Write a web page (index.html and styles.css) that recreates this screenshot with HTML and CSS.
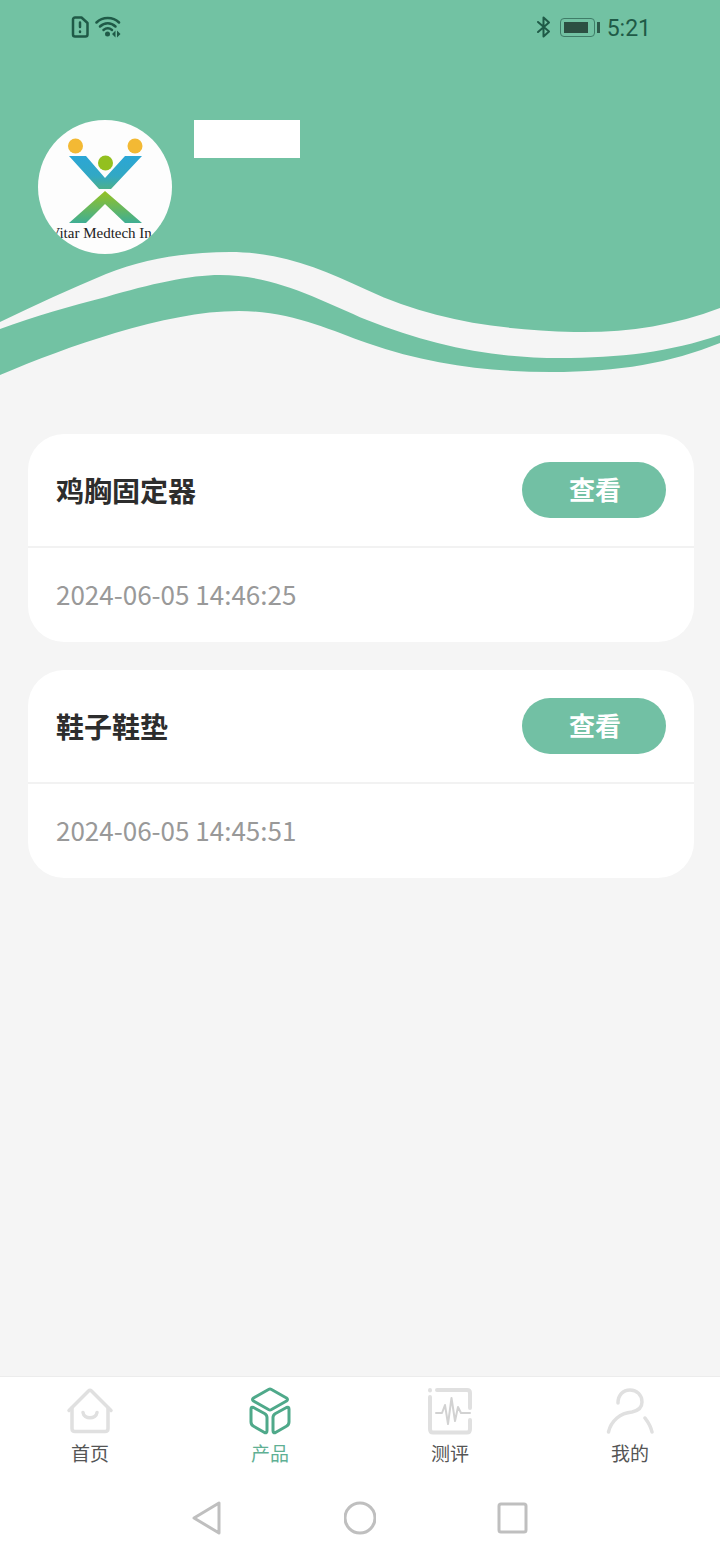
FILE: index.html
```html
<!DOCTYPE html>
<html lang="zh-CN">
<head>
    <meta charset="UTF-8">
    <title>产品</title>
    <meta name="viewport" content="width=device-width, initial-scale=1">
    <link rel="stylesheet" href="styles.css">
</head>
<body>
<div class="page">
    <header class="top">
        <svg class="wave" width="720" height="380" viewBox="0 0 720 380">
            <path class="wave-fill" d="M0 0H720V308C672 326 625 333 574 332C500 330 430 320 367 290C320 268 280 252 230 252C190 252 145 258 106 274C70 289 35 305 0 322Z"/>
            <path class="wave-fill" d="M0 329C36 316 70 306 106 297C150 284 190 275 220 275C275 275 320 300 367 320C430 345 490 358 560 358C620 358 670 352 720 335V343C670 363 620 372 551 372C490 372 430 365 367 343C330 330 290 311 239 311C200 311 160 320 115 333C75 345 35 360 0 375Z"/>
        </svg>
        <div class="status">
            <div class="status-left">
                <svg class="sim" width="18" height="22" viewBox="0 0 18 22">
                    <path d="M4 1.500H10.500L16.500 7V18.500A2 2 0 0 1 14.500 20.500H4A2 2 0 0 1 2 18.500V3.500A2 2 0 0 1 4 1.500Z"/>
                    <path d="M9 6.500V11M9 15.500V16"/>
                </svg>
                <svg class="wifi" width="26" height="22" viewBox="0 0 26 22">
                    <path d="M1.500 6.500C7.500 .5 18 .5 24 6.500"/>
                    <path d="M5 10.500C9.500 6 16 6 20.500 10.500"/>
                    <path d="M8.500 14C11 12 14.500 12 17 14"/>
                    <circle cx="12.500" cy="18" r="2.500"/>
                    <path class="wifi-arrows" d="M20.500 14.500L17 18L20.500 21.500ZM22 14.500L25.500 18L22 21.500Z"/>
                </svg>
            </div>
            <div class="status-right">
                <svg class="bt" width="16" height="22" viewBox="0 0 16 22">
                    <path d="M2 6L13 15.500L7.500 20.500V1.500L13 6.500L2 16"/>
                </svg>
                <div class="battery"><div class="battery-level"></div></div>
                <div class="battery-cap"></div>
                <span class="time">5:21</span>
            </div>
        </div>
        <div class="profile">
            <div class="avatar">
                <svg width="134" height="134" viewBox="0 0 134 134">
                    <defs>
                        <linearGradient id="armsTop" x1="0" y1="0" x2="0" y2="1">
                            <stop offset="0" stop-color="#2ba6d6"/>
                            <stop offset=".6" stop-color="#32a8c4"/>
                            <stop offset="1" stop-color="#4cb08c"/>
                        </linearGradient>
                        <linearGradient id="armsLow" x1="0" y1="0" x2="0" y2="1">
                            <stop offset="0" stop-color="#96c221"/>
                            <stop offset="1" stop-color="#3fae94"/>
                        </linearGradient>
                        <clipPath id="nameClip"><rect x="17" y="100" width="97" height="30"/></clipPath>
                    </defs>
                    <circle cx="37.500" cy="26" r="7.500" fill="#f3b934"/>
                    <circle cx="97" cy="26" r="7.500" fill="#f3b934"/>
                    <circle cx="67.500" cy="43" r="7.500" fill="#93c01f"/>
                    <polygon points="31,36 48,36 67,58 87,36 104,36 73,69 61,69" fill="url(#armsTop)"/>
                    <polygon points="67,71 104,103 87,103 67,84 48,103 31,103" fill="url(#armsLow)"/>
                    <g clip-path="url(#nameClip)">
                        <text class="logo-name" x="66" y="117.500" text-anchor="middle">Vitar Medtech Inc</text>
                    </g>
                </svg>
            </div>
            <div class="name-block"></div>
        </div>
    </header>

    <main class="list">
        <section class="card">
            <div class="card-head">
                <h2 class="card-title">鸡胸固定器</h2>
                <div class="view-btn">查看</div>
            </div>
            <div class="card-time">2024-06-05 14:46:25</div>
        </section>
        <section class="card">
            <div class="card-head">
                <h2 class="card-title">鞋子鞋垫</h2>
                <div class="view-btn">查看</div>
            </div>
            <div class="card-time">2024-06-05 14:45:51</div>
        </section>
    </main>

    <nav class="tabbar">
        <div class="tab">
            <svg class="tab-icon" width="48" height="48" viewBox="0 0 48 48">
                <path d="M3 23.500L22.500 4Q24 2.500 25.500 4L45 23.500"/>
                <path d="M6 21V41.500Q6 44.500 9 44.500H39Q42 44.500 42 41.500V21"/>
                <path d="M17 25.500C18 32.500 30 32.500 31 25.500"/>
            </svg>
            <span class="tab-label">首页</span>
        </div>
        <div class="tab tab-on">
            <svg class="tab-icon" width="48" height="48" viewBox="0 0 48 48">
                <path d="M22.500 2.500Q24 1.700 25.500 2.500L40.500 11Q42.500 12.500 40.500 14L25.500 22.500Q24 23.300 22.500 22.500L7.500 14Q5.500 12.500 7.500 11Z"/>
                <path d="M5 22Q5 19.500 7.500 20.500L18.500 26.500Q21 28 21 30.500V43.500Q21 46.500 18.500 45.500L8 39.500Q5 38 5 35Z"/>
                <path d="M43 22Q43 19.500 40.500 20.500L29.500 26.500Q27 28 27 30.500V43.500Q27 46.500 29.500 45.500L40 39.500Q43 38 43 35Z"/>
            </svg>
            <span class="tab-label">产品</span>
        </div>
        <div class="tab">
            <svg class="tab-icon tab-test" width="48" height="48" viewBox="0 0 48 48">
                <path d="M11 3H41Q44 3 44 6V21M44 33V42Q44 45.500 41 45.500H7Q4 45.500 4 42V10M4 3V3.500"/>
                <path class="tab-thin" d="M10 26H16L19 18L22 37L25.500 11L29 34L32 20L35 26H44"/>
            </svg>
            <span class="tab-label">测评</span>
        </div>
        <div class="tab">
            <svg class="tab-icon" width="48" height="48" viewBox="0 0 48 48">
                <path d="M12 16C12 8 17 3 24 3C31 3 36 8 36 15C36 21 31 24 26 25C14 26 5 34 2.500 45"/>
                <path d="M39 31C42 35 45 40 46 45"/>
            </svg>
            <span class="tab-label">我的</span>
        </div>
    </nav>

    <div class="sysbar">
        <svg class="sys-icon" width="32" height="36" viewBox="0 0 32 36">
            <path d="M28 3V33L3 18Z"/>
        </svg>
        <svg class="sys-icon" width="32" height="36" viewBox="0 0 32 36">
            <circle cx="16" cy="18" r="15"/>
        </svg>
        <svg class="sys-icon" width="32" height="36" viewBox="0 0 32 36">
            <rect x="2" y="4" width="27" height="28" rx="2"/>
        </svg>
    </div>
</div>
</body>
</html>
```

FILE: styles.css
```css
*{
    box-sizing: border-box;
}
body{
    margin: 0;
    background: #f5f5f5;
    font-family: "Noto Sans CJK SC", "Noto Sans", sans-serif;
}
.page{
    display: flex;
    flex-direction: column;
    width: 720px;
    height: 1560px;
    overflow: hidden;
}

/* top */
.top{
    position: relative;
    height: 434px;
    flex: none;
}
.wave{
    position: absolute;
    top: 0;
    left: 0;
}
.wave-fill{
    fill: #72c2a3;
}
.status{
    position: relative;
    display: flex;
    justify-content: space-between;
    align-items: center;
    height: 56px;
    padding: 0 69px 2px 71px;
    color: #1f5a47;
}
.status-left, .status-right{
    display: flex;
    align-items: center;
}
.status-left{
    gap: 6px;
}
.sim path, .wifi path, .bt path{
    fill: none;
    stroke: #1f5a47;
    stroke-width: 2.5;
    stroke-linecap: round;
    stroke-linejoin: round;
}
.wifi circle, .wifi .wifi-arrows{
    fill: #1f5a47;
    stroke: none;
}
.bt path{
    stroke-width: 2;
}
.battery{
    width: 35px;
    height: 19px;
    margin-left: 8px;
    padding: 3px 6px 3px 3px;
    border: 1.500px solid #3f7d68;
    border-radius: 4px;
}
.battery-level{
    height: 100%;
    background: #2c4f42;
}
.battery-cap{
    width: 3px;
    height: 11px;
    margin-left: 2px;
    background: #2c5a4a;
}
.time{
    margin: 4px 0 0 7px;
    font-family: Roboto, sans-serif;
    font-size: 23px;
    line-height: 30px;
}
.profile{
    position: relative;
    display: flex;
    gap: 22px;
    margin: 64px 0 0 38px;
}
.avatar{
    width: 134px;
    height: 134px;
    border-radius: 50%;
    background: #fdfdfd;
    overflow: hidden;
}
.logo-name{
    font-family: "Liberation Serif", serif;
    font-size: 15px;
    fill: #222;
}
.name-block{
    width: 106px;
    height: 38px;
    background: #fff;
}

/* list */
.list{
    display: flex;
    flex-direction: column;
    gap: 28px;
    padding: 0 26px 0 28px;
}
.card{
    height: 208px;
    border-radius: 36px;
    background: #fff;
}
.card-head{
    display: flex;
    justify-content: space-between;
    align-items: center;
    height: 114px;
    padding: 0 28px;
    border-bottom: 2px solid #f2f2f2;
}
.card-title{
    margin: 0;
    font-size: 28px;
    font-weight: 700;
    color: #2d2d2d;
}
.view-btn{
    width: 144px;
    height: 56px;
    padding-left: 2px;
    border-radius: 28px;
    background: #72c0a4;
    color: #fff;
    font-size: 26px;
    font-weight: 700;
    line-height: 54px;
    text-align: center;
}
.card-time{
    padding: 26px 28px 0;
    font-size: 26px;
    line-height: 40px;
    color: #999;
}

/* bottom */
.tabbar{
    display: grid;
    grid-template-columns: repeat(4, 1fr);
    height: 105px;
    margin-top: auto;
    padding-top: 10px;
    border-top: 1px solid #ececec;
    background: #fff;
}
.tab{
    display: flex;
    flex-direction: column;
    align-items: center;
}
.tab-icon path{
    fill: none;
    stroke: #e0e0e0;
    stroke-width: 3.500;
    stroke-linecap: round;
    stroke-linejoin: round;
}
.tab-test path{
    stroke-width: 4;
}
.tab-icon .tab-thin{
    stroke-width: 2;
    stroke: #d2d2d2;
}
.tab-on .tab-icon path{
    stroke: #4fa98a;
    stroke-width: 3;
}
.tab-label{
    margin-top: 4px;
    font-size: 19px;
    line-height: 28px;
    color: #555;
}
.tab-on .tab-label{
    color: #5fb094;
}
.sysbar{
    display: flex;
    justify-content: center;
    align-items: center;
    gap: 121px;
    height: 79px;
    padding-bottom: 5px;
    background: #fff;
}
.sys-icon path, .sys-icon circle, .sys-icon rect{
    fill: none;
    stroke: #bfbfbf;
    stroke-width: 3;
    stroke-linejoin: round;
}
```
